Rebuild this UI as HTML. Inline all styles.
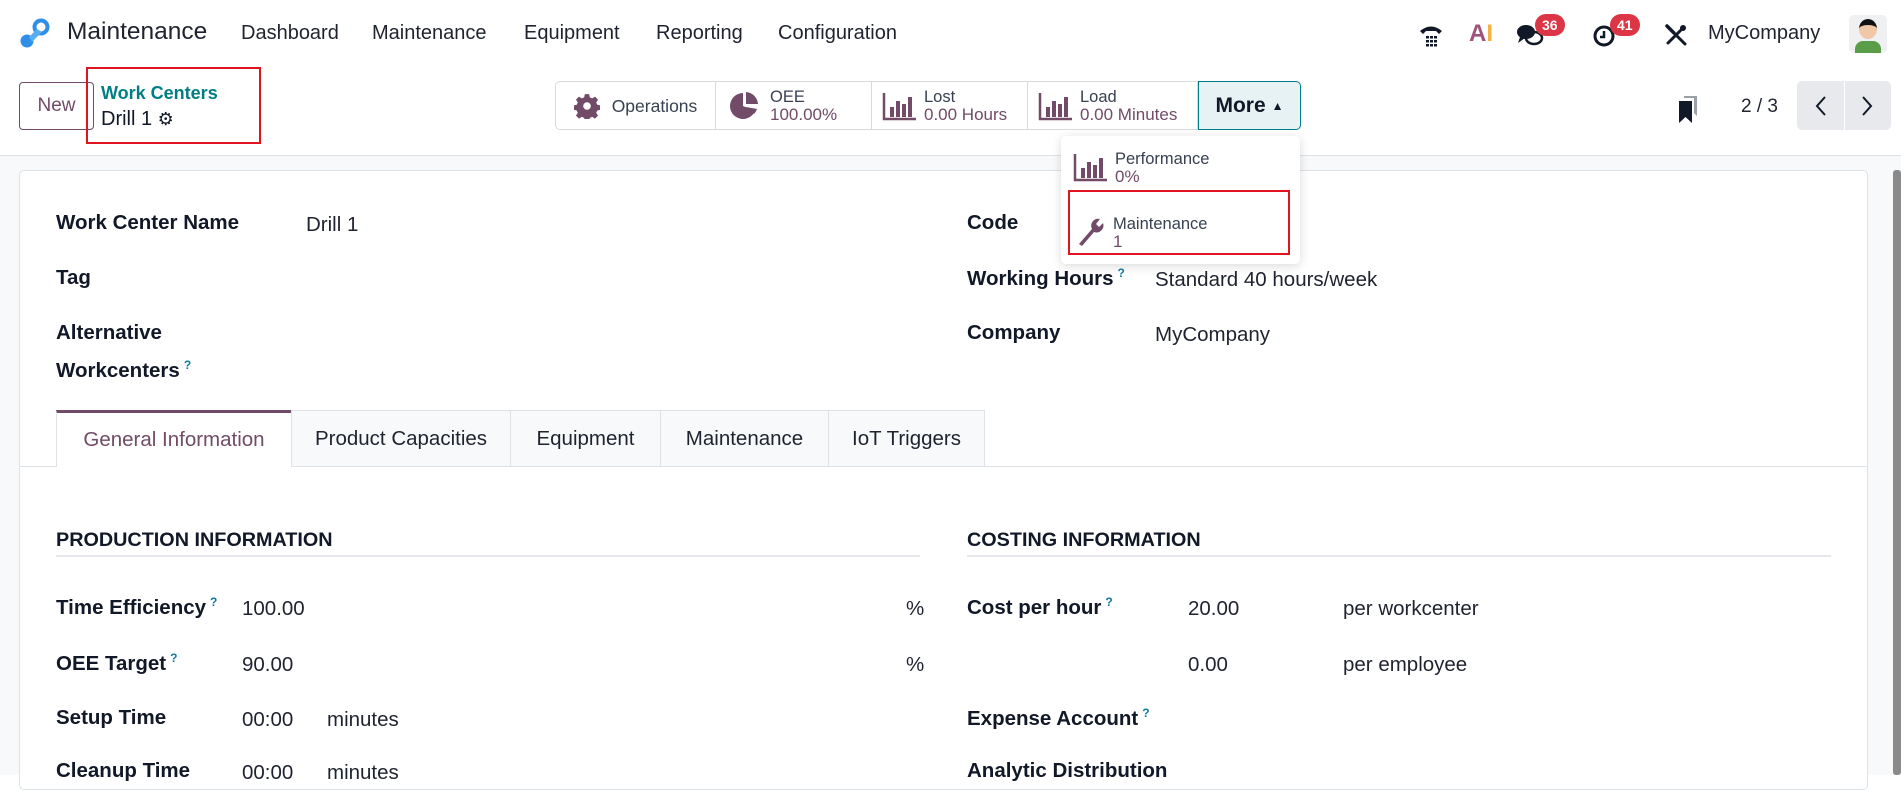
<!DOCTYPE html>
<html><head><meta charset="utf-8">
<style>
*{box-sizing:border-box;margin:0;padding:0}
body{width:1901px;height:775px;overflow:hidden;background:#fff;font-family:"Liberation Sans",sans-serif;color:#1f2330;position:relative}
.a{position:absolute;white-space:nowrap}
.nav{font-size:20px;top:22px}
.lbl{font-size:20.5px;font-weight:bold;color:#111827}
.val{font-size:20.5px;color:#1f2330}
.q{color:#0d7c9c;font-size:12px;vertical-align:super;font-weight:bold;margin-left:4px}
.sb{position:absolute;top:0;height:47px;border-right:1px solid #d8dadd;display:flex;align-items:center}
.sbt{font-size:16.5px;line-height:18px;color:#374151}
.sbv{color:#714b67;font-size:17px}
.tab{position:absolute;top:410px;height:56px;border:1px solid #dee2e6;border-bottom:none;background:#f8f9fa;font-size:20.5px;display:flex;align-items:center;justify-content:center;color:#1f2330}
</style></head><body>
<svg class="a" style="left:18px;top:18px" width="32" height="32" viewBox="0 0 32 32"><circle cx="23" cy="9" r="6.5" fill="none" stroke="#2f8fe8" stroke-width="4"/><circle cx="9" cy="23" r="6.5" fill="#2f8fe8"/><path d="M11 19 L19 11 L24 14 L14 24Z" fill="#5aaef0"/></svg>
<div class="a" style="left:67px;top:18px;font-size:24.5px;color:#1f2330">Maintenance</div>
<div class="a nav" style="left:241px">Dashboard</div>
<div class="a nav" style="left:372px">Maintenance</div>
<div class="a nav" style="left:524px">Equipment</div>
<div class="a nav" style="left:656px">Reporting</div>
<div class="a nav" style="left:778px">Configuration</div>
<svg class="a" style="left:1418px;top:22px" width="26" height="26" viewBox="0 0 26 26"><path d="M2 9 Q13 0 24 9 L21 12 L18 9 L8 9 L5 12Z" fill="#111827"/><g fill="#111827"><rect x="8" y="14" width="3" height="2.5"/><rect x="12" y="14" width="3" height="2.5"/><rect x="16" y="14" width="3" height="2.5"/><rect x="8" y="18" width="3" height="2.5"/><rect x="12" y="18" width="3" height="2.5"/><rect x="16" y="18" width="3" height="2.5"/><rect x="8" y="22" width="3" height="2.5"/><rect x="12" y="22" width="3" height="2.5"/><rect x="16" y="22" width="3" height="2.5"/></g></svg>
<div class="a" style="left:1469px;top:20px;font-size:24px;font-weight:bold;color:#a0527a">A<span style="color:#f5b142">I</span></div>
<svg class="a" style="left:1516px;top:22px" width="30" height="26" viewBox="0 0 30 26"><ellipse cx="10" cy="10" rx="9" ry="7" fill="#111827"/><path d="M4 15 L2 21 L9 16Z" fill="#111827"/><ellipse cx="18" cy="16" rx="8" ry="6" fill="none" stroke="#111827" stroke-width="2.5"/></svg>
<div class="a" style="left:1535px;top:14px;background:#dc3545;color:#fff;font-size:14px;font-weight:bold;border-radius:12px;padding:3px 7px">36</div>
<svg class="a" style="left:1592px;top:22px" width="26" height="26" viewBox="0 0 26 26"><circle cx="12" cy="14" r="9" fill="none" stroke="#111827" stroke-width="3"/><path d="M12 9 V15 H8" stroke="#111827" stroke-width="2.5" fill="none"/></svg>
<div class="a" style="left:1610px;top:14px;background:#dc3545;color:#fff;font-size:14px;font-weight:bold;border-radius:12px;padding:3px 7px">41</div>
<svg class="a" style="left:1664px;top:23px" width="24" height="24" viewBox="0 0 24 24"><path d="M3 3 L10 10" stroke="#111827" stroke-width="3.5" stroke-linecap="round"/><path d="M13 13 L21 21" stroke="#111827" stroke-width="3" stroke-linecap="round"/><path d="M20 4 L4 20" stroke="#111827" stroke-width="3" stroke-linecap="round"/><circle cx="19" cy="5" r="3" fill="#111827"/></svg>
<div class="a" style="left:1708px;top:22px;font-size:20px">MyCompany</div>
<div class="a" style="left:1849px;top:15px;width:38px;height:38px;border-radius:5px;background:#eef0f2;overflow:hidden"><div style="position:absolute;left:10px;top:4px;width:18px;height:20px;border-radius:50%;background:#f1c7a8;border-top:6px solid #111"></div><div style="position:absolute;left:6px;top:26px;width:26px;height:14px;background:#5a9e4a;border-radius:8px 8px 0 0"></div></div>
<div class="a" style="left:19px;top:82px;width:75px;height:48px;border:1px solid #714b67;border-radius:4px;font-size:19px;color:#714b67;display:flex;align-items:center;justify-content:center;background:#fff">New</div>
<div class="a" style="left:86px;top:67px;width:175px;height:77px;border:2.5px solid #e0141e"></div>
<div class="a" style="left:101px;top:83px;font-size:18px;font-weight:bold;color:#017e84">Work Centers</div>
<div class="a" style="left:101px;top:108px;font-size:20px;color:#111827">Drill 1 <span style="font-size:18px">⚙</span></div>
<div class="a" style="left:555px;top:81px;width:745px;height:49px;border:1px solid #d8dadd;border-radius:5px">
 <div class="sb" style="left:0;width:160px;justify-content:center"><svg width="26" height="26" viewBox="0 0 24 24"><path fill="#714b67" d="M10 1h4l.6 3 2.2 1 2.6-1.7 2.8 2.8-1.7 2.6 1 2.2 3 .6v4l-3 .6-1 2.2 1.7 2.6-2.8 2.8-2.6-1.7-2.2 1-.6 3h-4l-.6-3-2.2-1-2.6 1.7-2.8-2.8 1.7-2.6-1-2.2-3-.6v-4l3-.6 1-2.2-1.7-2.6 2.8-2.8 2.6 1.7 2.2-1zM12 8.5a3.5 3.5 0 100 7 3.5 3.5 0 000-7z"/></svg><span class="sbt" style="margin-left:12px;font-size:17.5px">Operations</span></div>
 <div class="sb" style="left:160px;width:156px;padding-left:12px"><svg width="32" height="32" viewBox="0 0 32 32"><path d="M15 3 A13 13 0 1 0 27 21 L15 16Z" fill="#714b67"/><path d="M18 2 A13 13 0 0 1 30 14 L18 14Z" fill="#714b67"/><path d="M18 17 L29 19 A13 13 0 0 1 26 24Z" fill="#714b67"/></svg><div class="sbt" style="margin-left:10px">OEE<br><span class="sbv">100.00%</span></div></div>
 <div class="sb" style="left:316px;width:156px;padding-left:10px"><svg width="36" height="30" viewBox="0 0 36 30"><path d="M2 2V28H34" stroke="#714b67" stroke-width="2.5" fill="none"/><rect x="8" y="16" width="4" height="10" fill="#714b67"/><rect x="14" y="10" width="4" height="16" fill="#714b67"/><rect x="20" y="13" width="4" height="13" fill="#714b67"/><rect x="26" y="6" width="4" height="20" fill="#714b67"/></svg><div class="sbt" style="margin-left:6px">Lost<br><span class="sbv">0.00 Hours</span></div></div>
 <div class="sb" style="left:472px;width:170px;padding-left:10px"><svg width="36" height="30" viewBox="0 0 36 30"><path d="M2 2V28H34" stroke="#714b67" stroke-width="2.5" fill="none"/><rect x="8" y="16" width="4" height="10" fill="#714b67"/><rect x="14" y="10" width="4" height="16" fill="#714b67"/><rect x="20" y="13" width="4" height="13" fill="#714b67"/><rect x="26" y="6" width="4" height="20" fill="#714b67"/></svg><div class="sbt" style="margin-left:6px">Load<br><span class="sbv">0.00 Minutes</span></div></div>
 <div class="a" style="left:642px;top:-1px;width:103px;height:49px;background:#e6f2f3;border:1px solid #017e84;border-radius:0 5px 5px 0;display:flex;align-items:center;justify-content:center;font-size:21px;font-weight:bold;color:#111827">More <span style="font-size:12px;margin-left:6px">▲</span></div>
</div>
<svg class="a" style="left:1677px;top:94px" width="22" height="30" viewBox="0 0 22 30"><path d="M7 2H20V22L17 19V4H7Z" fill="#9aa0a6"/><path d="M2 7H15V29L8.5 23L2 29Z" fill="#111827"/></svg>
<div class="a" style="left:1741px;top:96px;font-size:19px">2 / 3</div>
<div class="a" style="left:1797px;top:81px;width:94px;height:49px;background:#e7e9ed;border-radius:5px"><div style="position:absolute;left:47px;top:0;width:1px;height:49px;background:#fff"></div>
<svg style="position:absolute;left:16px;top:14px" width="16" height="22" viewBox="0 0 16 22"><path d="M12 2 L4 11 L12 20" stroke="#111827" stroke-width="2" fill="none"/></svg>
<svg style="position:absolute;left:62px;top:14px" width="16" height="22" viewBox="0 0 16 22"><path d="M4 2 L12 11 L4 20" stroke="#111827" stroke-width="2" fill="none"/></svg></div>
<div class="a" style="left:0;top:155px;width:1901px;height:620px;background:#f8f9fa;border-top:1px solid #dee2e6"></div>
<div class="a" style="left:1893px;top:170px;width:8px;height:605px;background:#8a8a8a;border-radius:3px"></div>
<div class="a" style="left:19px;top:170px;width:1849px;height:620px;background:#fff;border:1px solid #dee2e6;border-radius:5px"></div>
<div class="a" style="left:1061px;top:136px;width:239px;height:128px;background:#fff;border-radius:5px;box-shadow:0 2px 10px rgba(0,0,0,.15)"></div>
<svg class="a" style="left:1073px;top:152px" width="36" height="30" viewBox="0 0 36 30"><path d="M2 2V28H34" stroke="#714b67" stroke-width="2.5" fill="none"/><rect x="8" y="16" width="4" height="10" fill="#714b67"/><rect x="14" y="10" width="4" height="16" fill="#714b67"/><rect x="20" y="13" width="4" height="13" fill="#714b67"/><rect x="26" y="6" width="4" height="20" fill="#714b67"/></svg>
<div class="a sbt" style="left:1115px;top:150px">Performance<br><span class="sbv">0%</span></div>
<div class="a" style="left:1068px;top:190px;width:222px;height:65px;border:2.5px solid #e0141e"></div>
<svg class="a" style="left:1075px;top:215px" width="30" height="32" viewBox="0 0 30 32"><path d="M4 29 L17 14 A7 7 0 0 1 25 4 L21 9 L24 12 L28 8 A7 7 0 0 1 19 17 L7 31Z" fill="#714b67"/></svg>
<div class="a sbt" style="left:1113px;top:215px">Maintenance<br><span class="sbv">1</span></div>
<div class="a lbl" style="left:56px;top:211px">Work Center Name</div>
<div class="a val" style="left:306px;top:213px">Drill 1</div>
<div class="a lbl" style="left:56px;top:266px">Tag</div>
<div class="a lbl" style="left:56px;top:317px;line-height:32px">Alternative<br>Workcenters<span class="q">?</span></div>
<div class="a lbl" style="left:967px;top:211px">Code</div>
<div class="a lbl" style="left:967px;top:266px">Working Hours<span class="q">?</span></div>
<div class="a val" style="left:1155px;top:268px">Standard 40 hours/week</div>
<div class="a lbl" style="left:967px;top:321px">Company</div>
<div class="a val" style="left:1155px;top:323px">MyCompany</div>
<div class="a" style="left:19px;top:466px;width:1849px;height:1px;background:#dee2e6"></div>
<div class="tab" style="left:56px;width:236px;background:#fff;border-top:3px solid #714b67;color:#714b67;height:57px">General Information</div>
<div class="tab" style="left:291px;width:220px">Product Capacities</div>
<div class="tab" style="left:510px;width:151px">Equipment</div>
<div class="tab" style="left:660px;width:169px">Maintenance</div>
<div class="tab" style="left:828px;width:157px">IoT Triggers</div>
<div class="a lbl" style="left:56px;top:529px;font-size:19.8px">PRODUCTION INFORMATION</div>
<div class="a" style="left:56px;top:555px;width:864px;height:2px;background:#e5e7eb"></div>
<div class="a lbl" style="left:967px;top:529px;font-size:19.8px">COSTING INFORMATION</div>
<div class="a" style="left:967px;top:555px;width:864px;height:2px;background:#e5e7eb"></div>
<div class="a lbl" style="left:56px;top:595px">Time Efficiency<span class="q">?</span></div>
<div class="a val" style="left:242px;top:597px">100.00</div>
<div class="a val" style="left:906px;top:597px">%</div>
<div class="a lbl" style="left:56px;top:651px">OEE Target<span class="q">?</span></div>
<div class="a val" style="left:242px;top:653px">90.00</div>
<div class="a val" style="left:906px;top:653px">%</div>
<div class="a lbl" style="left:56px;top:706px">Setup Time</div>
<div class="a val" style="left:242px;top:708px">00:00</div>
<div class="a val" style="left:327px;top:708px">minutes</div>
<div class="a lbl" style="left:56px;top:759px">Cleanup Time</div>
<div class="a val" style="left:242px;top:761px">00:00</div>
<div class="a val" style="left:327px;top:761px">minutes</div>
<div class="a lbl" style="left:967px;top:595px">Cost per hour<span class="q">?</span></div>
<div class="a val" style="left:1188px;top:597px">20.00</div>
<div class="a val" style="left:1343px;top:597px">per workcenter</div>
<div class="a val" style="left:1188px;top:653px">0.00</div>
<div class="a val" style="left:1343px;top:653px">per employee</div>
<div class="a lbl" style="left:967px;top:706px">Expense Account<span class="q">?</span></div>
<div class="a lbl" style="left:967px;top:759px">Analytic Distribution</div>
</body></html>
